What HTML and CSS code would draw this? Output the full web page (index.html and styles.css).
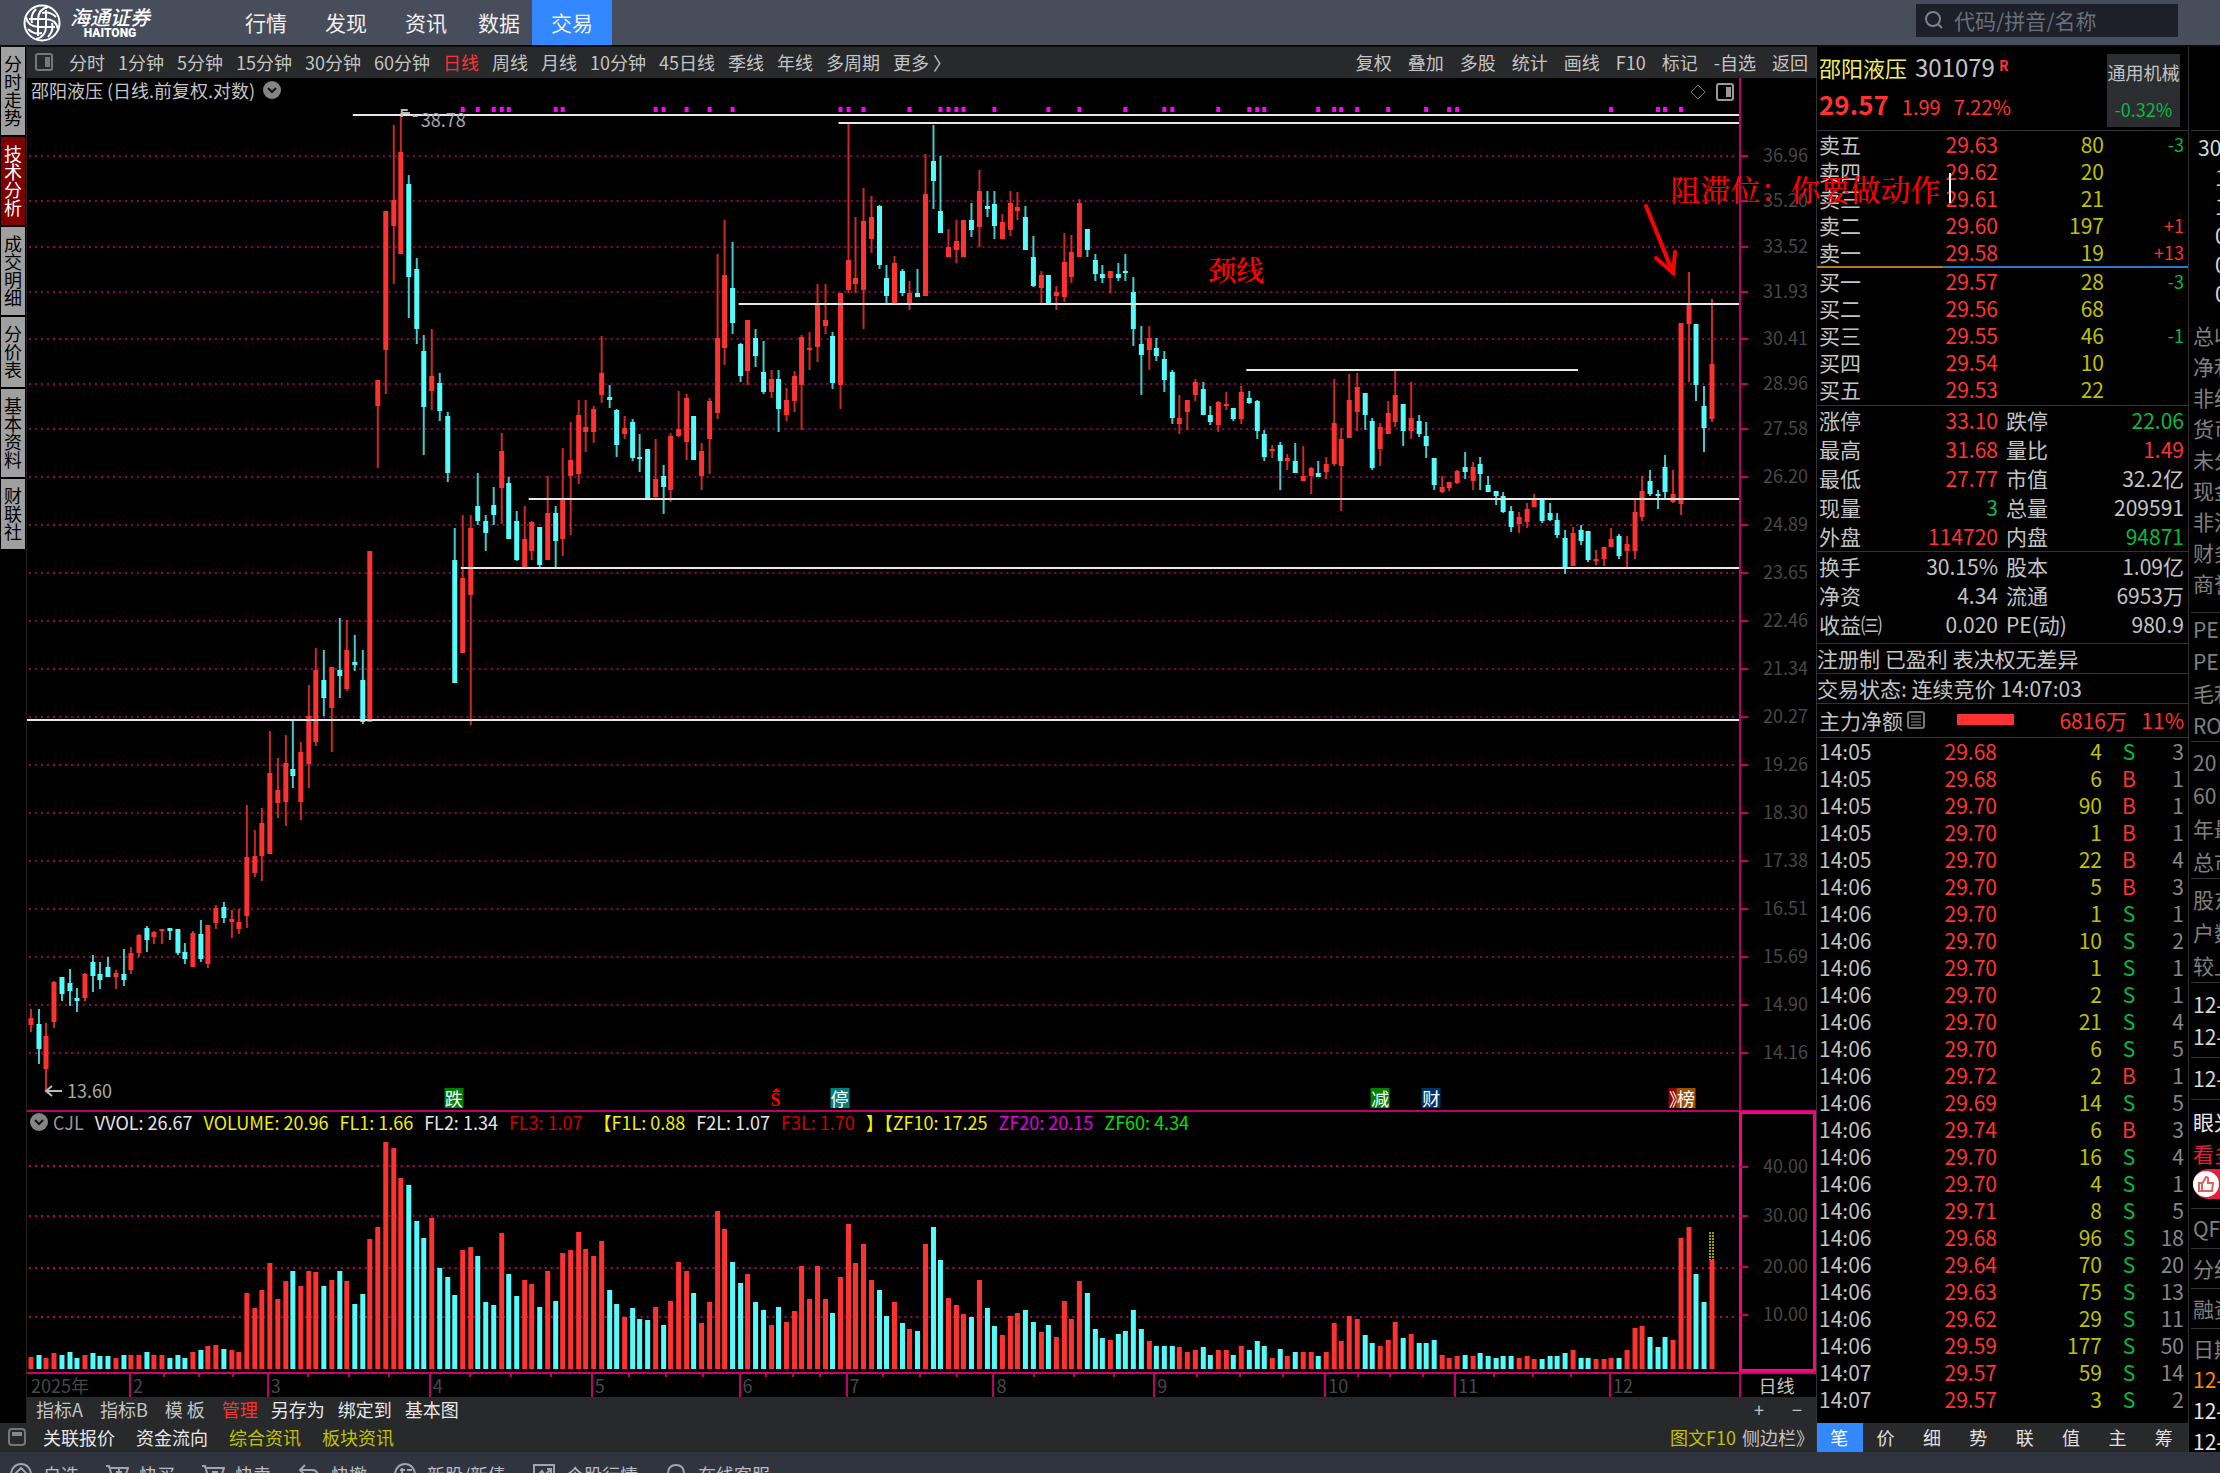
FILE: index.html
```html
<!DOCTYPE html>
<html lang="zh-CN">
<head>
    <meta charset="UTF-8">
    <meta name="viewport" content="width=device-width, initial-scale=1.0">
    <title>海通证券 - 邵阳液压</title>
    <link rel="stylesheet" href="styles.css">
</head>
<body>
<div class="app">
    <header class="header">
        <div class="logo">
            <svg width="40" height="40" viewBox="0 0 40 40" fill="none" stroke="#fff" stroke-width="2">
                <circle cx="20" cy="20" r="17.5"/>
                <path d="M16 33V17q0-11 10-13M24 7v16q0 11-10 13M7 16h16q11 0 13 10M33 24H17Q6 24 4 14"/>
                <path d="M6 26q6 6 14 4M34 14q-6-6-14-4M14 6q-6 6-4 14M26 34q6-6 4-14"/>
            </svg>
            <div class="logo-text">
                <span class="logo-cn">海通证券</span>
                <span class="logo-en">HAITONG</span>
            </div>
        </div>
        <nav class="nav">
            <button>行情</button>
            <button>发现</button>
            <button>资讯</button>
            <button class="narrow">数据</button>
            <button class="active">交易</button>
        </nav>
        <label class="search">
            <svg width="20" height="20" viewBox="0 0 20 20" fill="none" stroke="#7b8190" stroke-width="2"><circle cx="9" cy="9" r="7"/><path d="M14 14l4 4"/></svg>
            <input type="text" placeholder="代码/拼音/名称" aria-label="搜索">
        </label>
    </header>

    <main class="main">
        <section class="left">
            <div class="workspace">
                <aside class="side-tabs">
                    <button>分时走势</button>
                    <button class="active">技术分析</button>
                    <button>成交明细</button>
                    <button>分价表</button>
                    <button>基本资料</button>
                    <button>财联社</button>
                </aside>

                <div class="chart">
                    <div class="toolbar">
                        <div class="periods">
                            <svg class="panel-icon" width="18" height="18" viewBox="0 0 18 18"><rect x="1" y="1" width="16" height="16" rx="2" fill="none" stroke="#777" stroke-width="2"/><rect x="10" y="4" width="5" height="10" fill="#777"/></svg>
                            <button>分时</button>
                            <button>1分钟</button>
                            <button>5分钟</button>
                            <button>15分钟</button>
                            <button>30分钟</button>
                            <button>60分钟</button>
                            <button class="red">日线</button>
                            <button>周线</button>
                            <button>月线</button>
                            <button>10分钟</button>
                            <button>45日线</button>
                            <button>季线</button>
                            <button>年线</button>
                            <button>多周期</button>
                            <button>更多 〉</button>
                        </div>
                        <div class="tools">
                            <button>复权</button>
                            <button>叠加</button>
                            <button>多股</button>
                            <button>统计</button>
                            <button>画线</button>
                            <button>F10</button>
                            <button>标记</button>
                            <button>-自选</button>
                            <button>返回</button>
                        </div>
                    </div>

                    <div class="price-row">
                        <div class="plot">
                            <svg id="price-svg" class="plot-svg" viewBox="27 78 1713 1032" preserveAspectRatio="none"></svg>
                            <div class="plot-title">
                                <span>邵阳液压 (日线.前复权.对数)</span>
                                <svg width="18" height="18" viewBox="0 0 18 18"><circle cx="9" cy="9" r="9" fill="#858585"/><path d="M5 7l4 4 4-4" fill="none" stroke="#111" stroke-width="2"/></svg>
                            </div>
                            <div class="plot-icons">
                                <svg width="16" height="18" viewBox="0 0 16 18"><path d="M8 2l7 7-7 7-7-7z" fill="none" stroke="#777"/></svg>
                                <svg width="18" height="18" viewBox="0 0 18 18"><rect x="1" y="1" width="16" height="16" rx="2" fill="none" stroke="#999" stroke-width="2"/><rect x="10" y="4" width="5" height="10" fill="#999"/></svg>
                            </div>
                            <span class="mark high">38.78</span>
                            <span class="mark low">13.60</span>
                            <div id="events"></div>
                            <span class="note neck">颈线</span>
                            <span class="note block">阻滞位：你要做动作</span>
                        </div>
                        <div class="axis" id="price-axis"></div>
                    </div>

                    <div class="volume-row">
                        <div class="plot">
                            <svg id="volume-svg" class="plot-svg" viewBox="27 1112 1713 260" preserveAspectRatio="none"></svg>
                            <div class="indicator">
                                <svg width="18" height="18" viewBox="0 0 18 18"><circle cx="9" cy="9" r="9" fill="#858585"/><path d="M5 7l4 4 4-4" fill="none" stroke="#111" stroke-width="2"/></svg>
                                <span class="gray">CJL</span>
                                <span>VVOL: 26.67</span>
                                <span class="bright">VOLUME: 20.96</span>
                                <span class="bright">FL1: 1.66</span>
                                <span>FL2: 1.34</span>
                                <span class="dark-red">FL3: 1.07</span>
                                <span class="bright">【F1L: 0.88</span>
                                <span>F2L: 1.07</span>
                                <span class="dark-red">F3L: 1.70</span>
                                <span class="bright">】【ZF10: 17.25</span>
                                <span class="magenta">ZF20: 20.15</span>
                                <span class="lime">ZF60: 4.34</span>
                            </div>
                        </div>
                        <div class="axis selected" id="volume-axis"></div>
                    </div>

                    <div class="date-row">
                        <div class="dates" id="dates"></div>
                        <div class="period-name">日线</div>
                    </div>

                    <div class="templates">
                        <button class="wide">指标A</button>
                        <button class="wide">指标B</button>
                        <button class="wide">模 板</button>
                        <button class="red">管理</button>
                        <button class="white">另存为</button>
                        <button class="white">绑定到</button>
                        <button class="white">基本图</button>
                        <div class="zoom">
                            <button>+</button>
                            <button>−</button>
                        </div>
                    </div>
                </div>
            </div>

            <div class="infobar">
                <svg width="18" height="18" viewBox="0 0 18 18"><rect x="1" y="1" width="16" height="16" rx="3" fill="none" stroke="#777" stroke-width="2"/><rect x="4" y="4" width="10" height="4" fill="#888"/></svg>
                <button class="white">关联报价</button>
                <button class="white">资金流向</button>
                <button class="yellow">综合资讯</button>
                <button class="yellow">板块资讯</button>
                <div class="info-right">
                    <button class="yellow">图文F10</button>
                    <button>侧边栏》</button>
                </div>
            </div>
        </section>

        <section class="quote">
            <div class="quote-head">
                <div>
                    <div class="name"><b>邵阳液压</b><span>301079</span><sup>R</sup></div>
                    <div class="price"><b>29.57</b><span>1.99</span><span>7.22%</span></div>
                </div>
                <button class="sector"><span>通用机械</span><span class="green">-0.32%</span></button>
            </div>

            <table class="book">
                <tr><th>卖五</th><td class="red">29.63</td><td class="yellow">80</td><td class="chg green">-3</td></tr>
                <tr><th>卖四</th><td class="red">29.62</td><td class="yellow">20</td><td></td></tr>
                <tr><th>卖三</th><td class="red">29.61</td><td class="yellow">21</td><td></td></tr>
                <tr><th>卖二</th><td class="red">29.60</td><td class="yellow">197</td><td class="chg red">+1</td></tr>
                <tr><th>卖一</th><td class="red">29.58</td><td class="yellow">19</td><td class="chg red">+13</td></tr>
            </table>
            <div class="balance"></div>
            <table class="book buy">
                <tr><th>买一</th><td class="red">29.57</td><td class="yellow">28</td><td class="chg green">-3</td></tr>
                <tr><th>买二</th><td class="red">29.56</td><td class="yellow">68</td><td></td></tr>
                <tr><th>买三</th><td class="red">29.55</td><td class="yellow">46</td><td class="chg green">-1</td></tr>
                <tr><th>买四</th><td class="red">29.54</td><td class="yellow">10</td><td></td></tr>
                <tr><th>买五</th><td class="red">29.53</td><td class="yellow">22</td><td></td></tr>
            </table>

            <table class="stats">
                <tr><th>涨停</th><td class="red">33.10</td><th>跌停</th><td class="green">22.06</td></tr>
                <tr><th>最高</th><td class="red">31.68</td><th>量比</th><td class="red">1.49</td></tr>
                <tr><th>最低</th><td class="red">27.77</td><th>市值</th><td>32.2亿</td></tr>
                <tr><th>现量</th><td class="green">3</td><th>总量</th><td>209591</td></tr>
                <tr><th>外盘</th><td class="red">114720</td><th>内盘</th><td class="green">94871</td></tr>
            </table>
            <table class="stats basics">
                <tr><th>换手</th><td>30.15%</td><th>股本</th><td>1.09亿</td></tr>
                <tr><th>净资</th><td>4.34</td><th>流通</th><td>6953万</td></tr>
                <tr><th>收益㈢</th><td>0.020</td><th>PE(动)</th><td>980.9</td></tr>
            </table>
            <p class="line">注册制 已盈利 表决权无差异</p>
            <p class="line">交易状态: 连续竞价 14:07:03</p>
            <div class="fund">
                <span>主力净额</span>
                <svg width="18" height="18" viewBox="0 0 18 18"><rect x="1" y="1" width="16" height="16" rx="2" fill="none" stroke="#777" stroke-width="2"/><path d="M4 5h10M4 8h10M4 11h10M4 14h10" stroke="#999"/></svg>
                <i class="fund-bar"></i>
                <span class="fund-value red">6816万</span>
                <span class="fund-rate red">11%</span>
            </div>

            <table class="ticks"><tbody id="ticks"></tbody></table>

            <div class="quote-tabs">
                <button class="active">笔</button>
                <button>价</button>
                <button>细</button>
                <button>势</button>
                <button>联</button>
                <button>值</button>
                <button>主</button>
                <button>筹</button>
            </div>
        </section>

        <aside class="strip">
            <div class="s-head"></div>
            <div class="s-code"><p class="code">301079</p><p>1</p><p>1</p><p>0</p><p>0</p><p>0</p></div>
            <div class="s-fin"><p>总收入</p><p>净利润</p><p>非经常</p><p>货币</p><p>未分配</p><p>现金流</p><p>非流动</p><p>财务</p><p>商誉</p></div>
            <div class="s-pe"><p>PE</p><p>PE(</p><p>毛利</p><p>ROE</p></div>
            <div class="s-tall"><p>20日</p><p>60日</p><p>年最</p><p>总市</p></div>
            <div class="s-tall"><p>股东</p><p>户数</p><p>较上</p></div>
            <div class="s-days"><p>12-</p><p>12-</p></div>
            <div class="s-day"><p>12-</p></div>
            <div class="s-vote">
                <p class="white">眼光</p><p class="crimson">看多</p>
                <button aria-label="看多"><svg width="27" height="28" viewBox="0 0 27 28"><circle cx="13" cy="14" r="13" fill="#fff"/><path d="M6 13h3v8H6zM9 14l4-7q3 0 2 4v2h5l-1 8H9" fill="none" stroke="#e06060" stroke-width="2"/></svg></button>
            </div>
            <div class="s-one"><p>QFII</p></div>
            <div class="s-one"><p>分红</p></div>
            <div class="s-one"><p>融资</p></div>
            <div class="s-list"><p>日期</p><p class="orange">12-</p><p class="white">12-</p><p class="white">12-</p></div>
        </aside>
    </main>

    <footer class="taskbar">
        <button><svg width="24" height="24" viewBox="0 0 24 24"><circle cx="12" cy="12" r="10"/><path d="M12 6l6 6-6 6-6-6z"/></svg>自选</button>
        <button><svg width="24" height="24" viewBox="0 0 24 24"><path d="M1 4h3l4 14h12M5 6h18l-3 9H8M14 7v6M11 10h6"/></svg>快买</button>
        <button><svg width="24" height="24" viewBox="0 0 24 24"><path d="M1 4h3l4 14h12M5 6h18l-3 9H8M11 10h6"/></svg>快卖</button>
        <button><svg width="24" height="24" viewBox="0 0 24 24"><path d="M8 3L3 8l5 5M3 8h12q6 0 6 7v5"/></svg>快撤</button>
        <button><svg width="24" height="24" viewBox="0 0 24 24"><circle cx="12" cy="12" r="10"/><path d="M7 8h5M6 12h6M9 6v12M14 8h5M15 12h4M17 12v6"/></svg>新股/新债</button>
        <button><svg width="24" height="24" viewBox="0 0 24 24"><path d="M2 20V3h20v17zM5 14l5-5 3 4 6-6M15 7h4v4"/></svg>个股行情</button>
        <button><svg width="24" height="24" viewBox="0 0 24 24"><path d="M4 18V12q0-9 8-9t8 9v6M4 12h3v6H4M20 12h-3v6h3"/></svg>在线客服</button>
    </footer>
</div>
<script src="script.js"></script>
</body>
</html>
```
FILE: styles.css
```css
*{
    margin:0;
    padding:0;
    box-sizing: border-box;
}
html,body{
    height:100%;
    overflow: hidden;
}
body{
    background:#000;
    color:#c4c4c4;
    font-family: "Noto Sans CJK SC", "Noto Sans", sans-serif;
    font-size:18px;
    line-height: 24px;
    white-space: nowrap;
}
button{
    font:inherit;
    color:inherit;
    background:none;
    border:0;
    white-space: nowrap;
}
button svg{
    display:block;
}
.red{ color:#ff3232; }
.green{ color:#00bc40; }
.yellow{ color:#c0c000; }
.white{ color:#e6e6e6; }
.gray{ color:#999; }
.orange{ color:#ff8c00; }
.crimson{ color:#e02040; }
.magenta{ color:#e000e0; }
.lime{ color:#00e000; }
.bright{ color:#f0f000; }
.dark-red{ color:#d00000; }

.app{
    display: flex;
    flex-direction: column;
    height:100vh;
}

/* header */
.header{
    display: flex;
    align-items: center;
    height:47px;
    background:#474d5b;
    border-bottom:2px solid #0a0a0a;
    flex:none;
}
.logo{
    display: flex;
    align-items: center;
    width:226px;
    padding-left:22px;
}
.logo-text{
    display: flex;
    flex-direction: column;
    align-items: center;
    margin-left:8px;
    color:#fff;
}
.logo-cn{
    font-size:20px;
    font-style: italic;
    font-weight: 500;
    line-height: 20px;
}
.logo-en{
    font-family: Roboto, sans-serif;
    font-size:12px;
    font-weight: 900;
    line-height: 12px;
}
.nav{
    display: flex;
    height:100%;
}
.nav button{
    width:80px;
    padding-bottom:2px;
    font-size:21px;
    color:#f0f0f0;
}
.nav .narrow{
    width:66px;
}
.nav .active{
    background:#3388ff;
}
.search{
    display: flex;
    align-items: center;
    width:262px;
    height:33px;
    margin-left:auto;
    margin-right:42px;
    margin-bottom:5px;
    padding-left:8px;
    background:#1d2028;
}
.search input{
    flex:1;
    min-width:0;
    margin-left:10px;
    border:0;
    outline:0;
    background:none;
    color:#c4c4c4;
    font:inherit;
    font-size:21px;
}
.search input::placeholder{
    color:#6a6f7c;
}

/* layout */
.main{
    flex:1;
    min-height:0;
    display: grid;
    grid-template-columns: minmax(0, 1fr) 373px 31px;
}
.left{
    display: flex;
    flex-direction: column;
    min-height:0;
}
.workspace{
    flex:1;
    min-height:0;
    display: flex;
}
.side-tabs{
    width:27px;
    padding:0 1px;
    border-right:1px solid #222;
    display: flex;
    flex-direction: column;
    gap:2px;
}
.side-tabs button{
    writing-mode: vertical-rl;
    text-orientation: upright;
    padding:8px 0;
    line-height: 24px;
    background:#a0a0a0;
    color:#000;
}
.side-tabs .active{
    background:#800000;
    color:#fff;
}
.chart{
    flex:1;
    min-width:0;
    display: flex;
    flex-direction: column;
}
.toolbar{
    display: flex;
    justify-content: space-between;
    align-items: center;
    height:31px;
    padding:0 8px 2px;
    background:#28292b;
}
.periods{
    display: flex;
    align-items: center;
    gap:13px;
}
.panel-icon{
    margin-right:3px;
}
.tools{
    display: flex;
    gap:16px;
}

/* price plot */
.price-row{
    flex:1;
    min-height:0;
    display: flex;
}
.volume-row{
    display: flex;
    height:262px;
    border-top:2px solid #c0006a;
}
.plot{
    position: relative;
    flex:1;
    min-width:0;
}
.plot-svg{
    position: absolute;
    width:100%;
    height:100%;
}
.axis{
    position: relative;
    width:77px;
    border-left:2px solid #c0006a;
    color:#484848;
}
.axis.selected{
    border:3px solid #ff0080;
    margin-top:-1px;
}
.axis span{
    position: absolute;
    right:8px;
    line-height: 24px;
    margin-top:-14px;
}
.axis span::before{
    content:"";
    position: absolute;
    right:60px;
    top:13px;
    width:8px;
    height:2px;
    background:#c0006a;
}
.axis.selected span{
    right:5px;
}
.plot-title{
    position: relative;
    display: flex;
    align-items: center;
    gap:8px;
    padding:0 4px;
}
.plot-icons{
    position: absolute;
    right:5px;
    top:5px;
    display: flex;
    gap:10px;
}
.mark{
    position: absolute;
    line-height: 20px;
    color:#aaa;
}
.mark.high{
    left:23%;
    top:31px;
}
.mark.low{
    left:40px;
    bottom:10px;
}
.event{
    position: absolute;
    bottom:2px;
    width:19px;
    height:20px;
    line-height: 20px;
    text-align: center;
    color:#fff;
    transform: translateX(-50%);
}
.event.fall{ background:#008000; }
.event.stop{ background:#008080; }
.event.report{ background:#003468; }
.event.rank{ background:#a05000; }
.event.hot{ background:#900000; overflow:hidden; }
.event.sell{
    color:#ff0000;
    font-family: "Liberation Serif", serif;
    font-size:18px;
    font-weight: 700;
    line-height: 24px;
}
.event.sell::before{
    content:"";
    position: absolute;
    left:6px;
    top:0;
    border:4px solid transparent;
    border-top:0;
    border-bottom-color:#ff0000;
}
.note{
    position: absolute;
    z-index:2;
    color:#ff0000;
    font-family: "Noto Serif CJK SC", "Noto Sans CJK SC", serif;
    line-height: 30px;
}
.note.neck{
    left:69%;
    top:176px;
    font-size:28px;
    font-weight: 600;
}
.note.block{
    left:96%;
    top:95px;
    font-size:30px;
    font-weight: 500;
    border-right:2px solid #fff;
    padding-right:8px;
}
.indicator{
    position: relative;
    display: flex;
    align-items: center;
    gap:11px;
    height:20px;
    padding-left:3px;
    color:#e6e6e6;
}
.indicator svg{
    margin-right:-6px;
}
.date-row{
    display: flex;
    height:25px;
    border-top:2px solid #d00070;
    line-height: 22px;
}
.dates{
    position: relative;
    flex:1;
    border-right:2px solid #c0006a;
    color:#484848;
}
.dates span{
    position: absolute;
    height:100%;
    padding-left:2px;
    border-left:2px solid #c0006a;
}
.dates span:first-child{
    border:0;
}
.dates i{
    position: absolute;
    width:2px;
    height:3px;
    background:#c0006a;
}
.period-name{
    width:75px;
    padding-right:4px;
    text-align: center;
}
.templates{
    display: flex;
    align-items: center;
    gap:13px;
    height:26px;
    padding:0 0 2px 9px;
    background:#28292b;
}
.templates .wide{
    margin-right:4px;
}
.zoom{
    display: flex;
    margin-left:auto;
}
.zoom button{
    width:38px;
}
.infobar{
    display: flex;
    align-items: center;
    gap:21px;
    height:29px;
    padding:0 8px 2px;
    background:#28292b;
}
.infobar svg{
    margin-right:-4px;
}
.info-right{
    display: flex;
    gap:6px;
    margin-left:auto;
    margin-right:-6px;
}

/* quote panel */
.quote{
    display: flex;
    flex-direction: column;
    border-left:1px solid #333;
    border-right:1px solid #333;
    font-size:21px;
}
.quote-head{
    display: flex;
    justify-content: space-between;
    height:84px;
    padding:3px 8px 0 2px;
    border-bottom:1px solid #333;
}
.name{
    font-size:24px;
    line-height: 34px;
}
.name b{
    font-size:22px;
    font-weight: 400;
    color:#f0f060;
    margin-right:8px;
}
.name sup{
    color:#ff3232;
    font-size:14px;
    font-weight: 700;
    line-height: 14px;
    vertical-align: 6px;
    margin-left:4px;
}
.price{
    color:#ff3232;
    font-size:20px;
    line-height: 40px;
}
.price b{
    font-size:26px;
}
.price span{
    margin-left:13px;
}
.sector{
    display: flex;
    flex-direction: column;
    justify-content: space-around;
    align-items: center;
    width:73px;
    height:73px;
    margin-top:4px;
    background:#2c2d30;
    font-size:18px;
}
table{
    width:100%;
    table-layout: fixed;
    border-collapse: collapse;
}
th{
    width:60px;
    padding-left:2px;
    font-weight: 400;
    text-align: left;
}
td{
    text-align: right;
}
.book{
    line-height: 27px;
}
.book td:nth-child(2), .stats td:nth-child(2){
    width:121px;
}
.book td:nth-child(3){
    width:106px;
}
.book td:last-child, .stats td:last-child{
    padding-right:4px;
}
.book .chg{
    font-size:18px;
}
.balance{
    height:2px;
    background:linear-gradient(90deg, #b87820 34%, #2a78c8 34%);
}
.book.buy{
    margin-bottom:2px;
}
.stats{
    line-height: 29px;
    border-top:1px solid #333;
}
.stats th:nth-child(3){
    width:70px;
    padding-left:8px;
}
.basics{
    margin-bottom:4px;
}
.line{
    line-height: 29px;
    border-top:1px solid #333;
}
.fund{
    display: flex;
    align-items: center;
    height:35px;
    padding:0 4px 2px 2px;
    border-top:1px solid #333;
    border-bottom:1px solid #333;
}
.fund svg{
    margin-left:4px;
}
.fund-bar{
    width:57px;
    height:11px;
    margin-left:32px;
    background:#ff3232;
}
.fund-value{
    margin-left:auto;
}
.fund-rate{
    width:57px;
    text-align: right;
}
.ticks{
    line-height: 27px;
    color:#888;
}
.ticks th{
    color:#c4c4c4;
    width:70px;
}
.ticks td:nth-child(2){
    width:110px;
}
.ticks td:nth-child(3){
    width:105px;
}
.ticks td:nth-child(4){
    width:54px;
    text-align: center;
}
.ticks td:last-child{
    padding-right:4px;
}
.quote-tabs{
    display: flex;
    height:29px;
    margin-top:auto;
    background:#28292b;
    font-size:18px;
}
.quote-tabs button{
    flex:1;
    padding:0 2px 2px 0;
    color:#e0e0e0;
}
.quote-tabs .active{
    background:#3388ff;
    color:#fff;
}

/* clipped financial column */
.strip{
    overflow: hidden;
    padding-left:2px;
    font-size:21px;
    color:#808080;
}
.strip > div{
    border-bottom:1px solid #333;
    padding-left:2px;
}
.s-head{
    height:84px;
}
.strip .s-code{
    border:0;
    color:#d8d8d8;
    line-height: 29px;
    padding-left:24px;
    padding-bottom:12px;
}
.s-code .code{
    margin-left:-17px;
    line-height: 32px;
}
.s-fin{
    line-height: 31px;
    padding-bottom:13px;
}
.s-pe{
    line-height: 32px;
}
.s-tall{
    line-height: 33px;
    padding-top:4px;
}
.s-days{
    line-height: 32px;
    padding:5px 0;
    color:#d8d8d8;
}
.s-day{
    line-height: 41px;
    color:#d8d8d8;
}
.s-vote{
    line-height: 32px;
    padding:5px 0 9px;
}
.s-vote button{
    display:block;
    width:40px;
    height:30px;
    background:#e02040;
    border-radius: 15px 0 0 15px;
}
.s-one{
    line-height: 39px;
}
.s-list{
    line-height: 31px;
    padding-top:4px;
}

.taskbar{
    display: flex;
    gap:26px;
    height:21px;
    padding-left:9px;
    background:#30343f;
    overflow: hidden;
    flex:none;
}
.taskbar button{
    display: flex;
    align-items: center;
    gap:10px;
    height:44px;
    color:#b8bcc4;
}
.taskbar svg{
    fill:none;
    stroke:#a0a4ac;
    stroke-width:2;
}
```
FILE: script.js
```js
// one row per day: colour, high, body top, body bottom, low
const candles = `
R 1009 1018 1025 1032|C 1009 1024 1049 1064|R 1023 1036 1069 1090|R 981 982 1022 1028|C 977 977 994 1001
C 969 983 991 1006|C 988 998 1001 1012|R 973 974 998 1001|C 955 962 976 992|C 962 974 980 989
C 957 967 977 977|R 970 973 977 989|C 949 974 980 986|R 947 953 970 974|R 934 935 953 957
C 926 928 940 952|R 931 932 937 944|R 929 929 930 944|C 928 928 931 940|C 929 929 953 955
C 943 952 959 964|R 931 933 967 967|C 920 934 959 962|R 925 925 964 968|R 905 908 923 929
C 902 907 918 923|R 910 919 922 938|R 909 922 929 934|R 805 857 916 928|R 830 856 873 877
R 808 823 856 881|R 731 773 854 854|R 758 790 803 818|R 735 763 802 826|C 721 769 776 788
R 742 752 802 820|R 685 716 764 788|R 648 670 742 746|C 650 680 698 716|R 667 667 708 752
C 618 670 676 698|R 620 650 689 691|C 635 662 665 671|C 650 680 722 724|R 551 551 722 722
R 380 380 406 468|R 211 211 350 394|R 125 200 226 284|R 113 152 254 254|C 175 184 277 318
C 258 269 329 344|C 335 351 407 455|R 329 376 391 410|C 373 383 411 421|C 412 416 473 482
C 528 560 683 683|R 515 578 653 653|R 515 528 595 725|C 473 506 521 525|C 515 521 533 551
C 487 505 515 525|R 433 451 488 524|C 477 483 539 539|C 511 521 560 561|R 506 539 567 567
R 521 522 551 560|C 527 527 565 567|R 476 513 560 560|C 506 513 541 567|R 448 500 539 556
R 422 460 476 535|R 400 415 474 484|R 400 427 432 452|R 406 409 432 443|R 336 373 395 403
C 385 397 400 408|C 409 410 445 457|R 416 428 434 439|C 419 422 458 461|C 434 457 458 472
C 449 449 499 499|R 439 479 497 499|C 465 476 487 514|R 433 436 490 502|R 391 429 436 437
R 394 398 442 460|C 416 416 460 460|R 443 451 476 490|R 398 401 439 474|R 254 338 413 419
R 220 275 348 365|C 242 288 323 334|C 343 344 376 382|R 320 320 371 385|C 329 338 356 367
C 341 372 392 394|R 370 379 392 398|C 370 379 409 432|R 388 400 415 421|R 371 376 401 412
R 335 337 385 430|R 332 348 350 370|R 284 304 347 362|R 284 320 326 334|C 332 336 383 389
R 293 293 385 409|R 123 260 290 293|R 217 278 284 293|R 188 221 290 329|R 196 217 239 253
C 205 206 265 269|C 265 278 296 304|R 256 263 304 304|C 269 271 293 296|R 281 293 304 310
C 269 293 297 297|R 154 194 296 296|C 125 161 181 209|C 156 211 233 233|R 229 247 257 257
R 220 241 250 263|R 220 220 257 257|C 203 220 230 237|R 170 191 227 247|C 191 206 209 217
C 191 204 226 239|R 214 222 239 239|R 191 203 230 236|R 192 207 211 220|C 206 217 250 250
C 236 257 286 287|R 271 275 288 304|C 275 275 304 304|R 286 292 296 310|R 233 262 297 302
R 235 252 277 283|R 199 203 257 257|C 229 229 250 257|C 254 260 274 281|C 265 274 278 283
R 271 271 278 293|C 263 274 278 281|C 254 271 272 281|C 277 292 329 346|C 326 344 355 395
R 326 338 350 370|C 338 348 356 361|C 351 359 380 392|C 370 372 418 424|R 395 418 424 434
R 400 400 412 430|R 379 382 395 401|C 382 389 415 415|C 406 415 422 425|R 401 402 425 432
R 392 404 406 410|C 408 408 419 421|R 386 392 419 424|C 391 398 403 404|C 400 401 431 439
C 430 434 457 461|R 445 449 451 458|C 442 445 461 490|R 454 458 461 470|C 443 461 473 473
R 446 476 481 481|R 467 468 476 494|C 461 473 477 477|R 457 464 472 479|R 379 423 464 466
R 428 439 466 511|R 374 400 438 438|R 373 387 412 431|C 393 393 415 430|C 418 421 468 470
R 423 427 449 466|R 401 413 434 434|R 371 395 422 427|C 404 404 431 446|R 382 418 431 439
C 415 421 434 437|C 422 436 446 458|C 458 458 485 490|R 476 487 492 493|R 482 482 488 491
R 470 471 483 484|C 452 467 472 479|R 462 467 481 490|C 457 464 474 490|C 476 485 492 492
C 491 491 496 505|C 492 496 512 513|C 506 511 527 532|R 512 517 524 533|R 503 509 522 528
R 494 498 507 507|C 499 499 521 523|C 503 513 520 521|C 513 520 535 538|C 530 538 568 574
R 527 533 566 566|C 525 530 541 545|C 531 531 560 562|R 550 559 560 565|R 547 547 559 566
R 528 539 547 547|C 534 536 556 559|R 536 544 551 567|R 500 512 551 559|R 476 491 517 521
C 470 481 494 496|C 490 494 496 509|C 455 467 492 498|R 470 494 502 503|R 323 323 504 515
R 272 304 324 382|C 324 324 385 401|C 386 406 428 452|R 299 364 419 422`
    .trim().split(/[|\n]/).map(row => row.split(" "));

const volumes = [
    12,14,11,16,14,17,11,14,16,13,13,11,14,14,14,17,14,14,11,14,
    11,17,19,23,24,20,19,17,76,61,79,106,70,88,98,83,98,97,83,89,
    98,88,65,75,130,142,227,221,191,184,148,131,151,101,92,74,119,122,113,67,
    64,136,95,73,89,85,62,98,68,116,119,137,120,113,128,79,65,52,61,50,
    49,62,44,68,107,98,76,46,67,158,140,107,86,95,67,59,44,62,47,58,
    103,70,103,70,56,92,145,106,125,89,79,53,67,46,40,38,125,142,109,71,
    64,55,52,89,61,43,34,53,56,59,47,37,44,32,68,50,88,76,40,31,
    29,35,38,59,40,28,23,23,23,22,17,19,22,14,19,19,14,23,19,28,
    23,11,20,13,17,17,17,13,17,46,28,53,50,34,26,23,29,47,31,35,
    26,26,29,14,11,13,14,13,16,13,11,13,13,11,13,10,10,13,13,16,
    19,11,11,10,10,11,11,19,41,43,32,22,32,29,131,142,95,67,109
];

const LEFT = 27, WIDTH = 1713;
const barX = i => 31 + i * 7.714;
const colors = { R: "#ff3232", C: "#54fcfc" };
const percent = x => (x - LEFT) / WIDTH * 100 + "%";

const priceGrid = {
    "36.96": 156, "35.20": 201, "33.52": 247, "31.93": 292, "30.41": 339, "28.96": 384, "27.58": 429,
    "26.20": 477, "24.89": 525, "23.65": 573, "22.46": 621, "21.34": 669, "20.27": 717, "19.26": 765,
    "18.30": 813, "17.38": 861, "16.51": 909, "15.69": 957, "14.90": 1005, "14.16": 1053
};
const volumeGrid = { "40.00": 1166, "30.00": 1216, "20.00": 1268, "10.00": 1317 };

function gridLines(grid, color) {
    return Object.values(grid).map(y =>
        `<path d="M29 ${y}H1738" stroke="${color}" stroke-width="2" stroke-dasharray="2 4"/>`).join("");
}
function axisLabels(grid, top, height) {
    return Object.entries(grid).map(([label, y]) =>
        `<span style="top:${(y - top) / height * 100}%">${label}</span>`).join("");
}

// price chart
let price = gridLines(priceGrid, "#900058");
candles.forEach(([c, high, top, bottom, low], i) => {
    const x = Math.round(barX(i));
    price += `<path d="M${x} ${high}V${low}" stroke="${colors[c]}" stroke-opacity="0.8" stroke-width="2"/>`;
    price += `<rect x="${x - 2.5}" y="${top}" width="5" height="${Math.max(bottom - top, 2)}" fill="${colors[c]}"/>`;
});
// signal squares above the candles
[56,58,60,61,62,68,69,81,82,85,88,91,105,106,108,114,118,119,120,121,125,132,136,142,147,148,154,
 158,159,160,167,169,170,172,176,181,184,185,205,211,212,214].forEach(i => {
    price += `<rect x="${Math.round(barX(i)) - 2}" y="107" width="4" height="5" fill="#ff00ff"/>`;
});
// drawn support and resistance lines: x1, x2, y
[[353,1740,115],[839,1740,123],[739,1740,304],[1247,1579,370],[529,1740,499],[461,1740,568],[27,1740,720]].forEach(([x1, x2, y]) => {
    price += `<path d="M${x1} ${y}H${x2}" stroke="#e8e8e8" stroke-width="2"/>`;
});
price += `<path d="M402 117v-7h6M402 113h8M413 116h5M46 1091h16M52 1086l-6 5 6 5" fill="none" stroke="#bbb" stroke-width="2"/>`;
price += `<path d="M1647 206L1674 273M1657 258L1674 273L1676 252" fill="none" stroke="#f00" stroke-width="4" stroke-linecap="round"/>`;
document.getElementById("price-svg").innerHTML = price;
document.getElementById("price-axis").innerHTML = axisLabels(priceGrid, 78, 1032);

// volume chart
let volume = gridLines(volumeGrid, "#b00068");
volumes.forEach((h, i) => {
    volume += `<rect x="${Math.round(barX(i)) - 2.5}" y="${1369 - h}" width="5" height="${h}" fill="${colors[candles[i][0]]}"/>`;
});
volume += `<path d="M1711 1232V1260M1714 1232V1260" stroke="#a0a000" stroke-width="2" stroke-dasharray="2 1"/>`;
document.getElementById("volume-svg").innerHTML = volume;
document.getElementById("volume-axis").innerHTML = axisLabels(volumeGrid, 1112, 260);

// event badges along the bottom of the price chart
document.getElementById("events").innerHTML = [
    [454, "fall", "跌"], [776, "sell", "S"], [840, "stop", "停"], [1381, "fall", "减"],
    [1432, "report", "财"], [1679, "hot", "》"], [1687, "rank", "榜"]
].map(([x, type, text]) => `<span class="event ${type}" style="left:${percent(x)}">${text}</span>`).join("");

// months, with three week ticks between each
const months = [[29, "2025年"], [129, "2"], [267, "3"], [429, "4"], [591, "5"], [739, "6"], [846, "7"],
    [993, "8"], [1154, "9"], [1325, "10"], [1455, "11"], [1610, "12"]];
document.getElementById("dates").innerHTML = months.map(([x, label], i) => {
    let html = `<span style="left:${percent(x)}">${label}</span>`;
    if (i > 0 && i < months.length - 1) {
        for (let k = 1; k < 4; k++) {
            html += `<i style="left:${percent(x + (months[i + 1][0] - x) * k / 4)}"></i>`;
        }
    }
    return html;
}).join("");

// time and sales
const ticks = [
    ["14:05","29.68",4,"S",3],["14:05","29.68",6,"B",1],["14:05","29.70",90,"B",1],["14:05","29.70",1,"B",1],
    ["14:05","29.70",22,"B",4],["14:06","29.70",5,"B",3],["14:06","29.70",1,"S",1],["14:06","29.70",10,"S",2],
    ["14:06","29.70",1,"S",1],["14:06","29.70",2,"S",1],["14:06","29.70",21,"S",4],["14:06","29.70",6,"S",5],
    ["14:06","29.72",2,"B",1],["14:06","29.69",14,"S",5],["14:06","29.74",6,"B",3],["14:06","29.70",16,"S",4],
    ["14:06","29.70",4,"S",1],["14:06","29.71",8,"S",5],["14:06","29.68",96,"S",18],["14:06","29.64",70,"S",20],
    ["14:06","29.63",75,"S",13],["14:06","29.62",29,"S",11],["14:06","29.59",177,"S",50],["14:07","29.57",59,"S",14],
    ["14:07","29.57",3,"S",2]
];
document.getElementById("ticks").innerHTML = ticks.map(([time, p, vol, side, count]) =>
    `<tr><th>${time}</th><td class="red">${p}</td><td class="yellow">${vol}</td>
    <td class="${side === "S" ? "green" : "red"}">${side}</td><td>${count}</td></tr>`).join("");
```
